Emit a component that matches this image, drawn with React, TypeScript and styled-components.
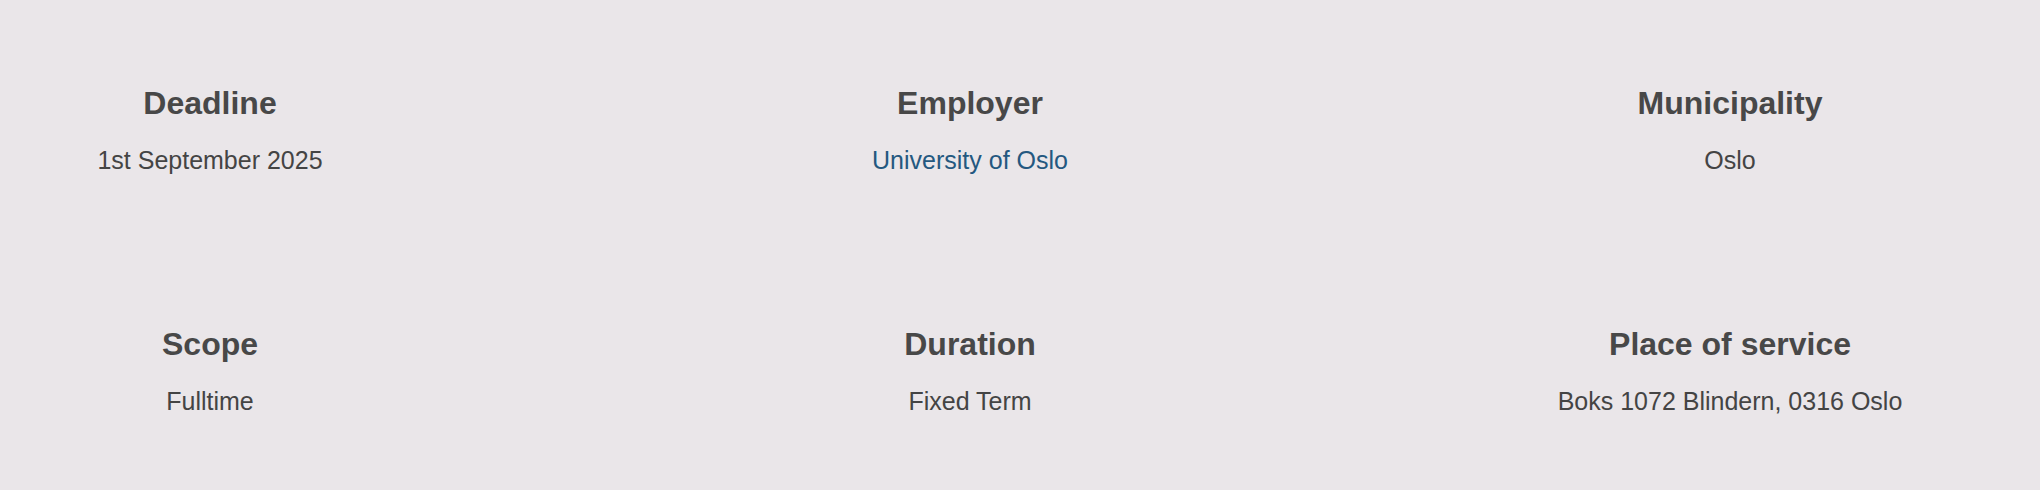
import React from "react";
import styled, { createGlobalStyle } from "styled-components";

const GlobalStyle = createGlobalStyle`
  html, body {
    margin: 0;
    padding: 0;
    background-color: rgb(234, 230, 233);
  }
  body {
    font-family: "Liberation Sans", Arial, Helvetica, sans-serif;
  }
`;

type Fact = {
  label: string;
  value: string;
  href?: string;
};

const facts: Fact[] = [
  { label: "Deadline", value: "1st September 2025" },
  { label: "Employer", value: "University of Oslo", href: "#" },
  { label: "Municipality", value: "Oslo" },
  { label: "Scope", value: "Fulltime" },
  { label: "Duration", value: "Fixed Term" },
  { label: "Place of service", value: "Boks 1072 Blindern, 0316 Oslo" },
];

function App() {
  return (
    <>
      <GlobalStyle />
      <Page>
        <FactGrid>
          {facts.map((fact) => (
            <FactItem key={fact.label}>
              <FactLabel>{fact.label}</FactLabel>
              {fact.href ? (
                <FactLink href={fact.href}>{fact.value}</FactLink>
              ) : (
                <FactValue>{fact.value}</FactValue>
              )}
            </FactItem>
          ))}
        </FactGrid>
      </Page>
    </>
  );
}
export default App;

const Page = styled.main`
  width: 2040px;
  height: 490px;
  box-sizing: border-box;
  padding-top: 84px;
`;

const FactGrid = styled.dl`
  margin: 0;
  display: grid;
  grid-template-columns: repeat(3, 420px);
  column-gap: 340px;
  row-gap: 150px;
`;

const FactItem = styled.div`
  display: flex;
  flex-direction: column;
  align-items: center;
  gap: 23px;
  text-align: center;
`;

const FactLabel = styled.dt`
  margin: 0;
  color: rgb(72, 72, 72);
  font-size: 32px;
  font-weight: 700;
  line-height: 38px;
`;

const FactValue = styled.dd`
  margin: 0;
  color: rgb(68, 68, 68);
  font-size: 25px;
  line-height: 30px;
`;

const FactLink = styled.a`
  display: block;
  color: rgb(36, 88, 128);
  font-size: 25px;
  line-height: 30px;
  text-decoration: none;
`;
